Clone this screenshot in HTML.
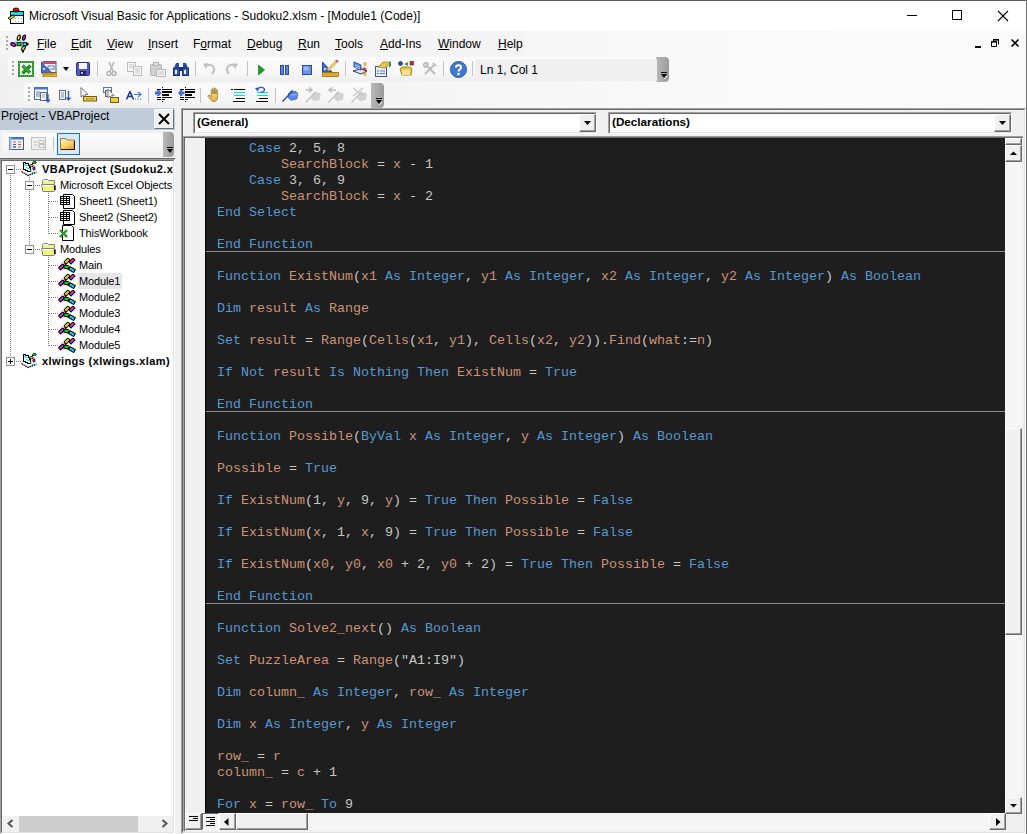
<!DOCTYPE html>
<html><head><meta charset="utf-8">
<style>
*{margin:0;padding:0;box-sizing:border-box}
html,body{width:1027px;height:834px;overflow:hidden;background:#f0f0f0;font-family:"Liberation Sans",sans-serif;position:relative}
.a{position:absolute}
.nw{white-space:nowrap}
#frameT{left:0;top:0;width:1027px;height:1px;background:#5b5b5b}
#frameR{left:1026px;top:0;width:1px;height:834px;background:#6f6f6f}
#title{left:0;top:1px;width:1026px;height:30px;background:#fff}
#dock{left:0;top:31px;width:1026px;height:77px;background:linear-gradient(to right,#f0f0f0 0px,#f3f3f3 300px,#f9f9f9 700px,#fafafa 1026px)}
#menubar{left:0;top:31px;width:525px;height:26px;background:#f4f4f4}
.menu{top:37px;font-size:12px;color:#000;white-space:nowrap;line-height:14px}
.menu u{text-decoration:underline;text-decoration-thickness:1px;text-underline-offset:1px}
.tb{background:linear-gradient(#fbfbfb,#f6f6f6 70%,#eeeeee);border-radius:3px 0 0 3px}
.grip{width:2px;background:repeating-linear-gradient(#ababab 0 2px,transparent 2px 4px)}
.sep{width:1px;background:#c4c4c4}
.chev{background:linear-gradient(to right,#b9b9b9,#9a9a9a);border-radius:0 4px 4px 0}
#code{left:206px;top:138px;width:799px;height:675px;background:#1e1e1e;overflow:hidden}
pre{font-family:"Liberation Mono",monospace;font-size:13.333px;line-height:16px;position:absolute;left:11px;top:3px;color:#c8c8c8;margin:0}
.k{color:#5499d4}.i{color:#cf9274}
.hsep{left:0;width:799px;height:1px;background:#8e8e8e}
.tree{font-size:11px;color:#000;white-space:nowrap;line-height:13px;letter-spacing:-0.12px}
.b3d{background:#f0f0f0;border-top:1px solid #fff;border-left:1px solid #fff;border-right:1px solid #696969;border-bottom:1px solid #696969;box-shadow:inset -1px -1px 0 #a0a0a0}
.chk{background-color:#f7f7f7;background-image:repeating-conic-gradient(#fdfdfd 0 25%,#eeeeee 0 50%);background-size:2px 2px}

</style></head><body>
<div id="title" class="a">
  <svg class="a" style="left:6px;top:5px" width="20" height="20" viewBox="0 0 20 20">
    <rect x="4.5" y="5.5" width="13" height="12" fill="#fff" stroke="#000" stroke-width="1"/>
    <rect x="5" y="6" width="12" height="3" fill="#00e4f4"/>
    <path d="M5 9.5 H17" stroke="#000" stroke-width="1"/>
    <path d="M9 12.5 H10 M12 12.5 H13 M15 12.5 H16 M9 15.5 H10 M12 15.5 H13 M15 15.5 H16" stroke="#b0b0b0"/>
    <ellipse cx="10" cy="4" rx="3" ry="2" fill="#e00000" stroke="#000" stroke-width=".8"/>
    <path d="M2 12 L7 9 L9 10.5 L4 13.5 Z" fill="#e8d800" stroke="#000" stroke-width=".8"/>
  </svg>
  <div class="a nw" style="left:29px;top:8px;font-size:12px;color:#000">Microsoft Visual Basic for Applications - Sudoku2.xlsm - [Module1 (Code)]</div>
  <div class="a" style="left:907px;top:14px;width:10px;height:1px;background:#000"></div>
  <div class="a" style="left:952px;top:9px;width:10px;height:10px;border:1px solid #000"></div>
  <svg class="a" style="left:997px;top:9px" width="12" height="12" viewBox="0 0 12 12"><path d="M1 1 L11 11 M11 1 L1 11" stroke="#000" stroke-width="1.1"/></svg>
</div>
<div id="dock" class="a"></div>
<div id="menubar" class="a"></div>
<div class="a grip" style="left:6px;top:36px;height:14px"></div>
<svg class="a" style="left:8px;top:32px" width="22" height="22" viewBox="0 0 22 22">
  <path d="M6 11.5 L10.5 7.5 M11.5 8 L16 12 M12 13 L15 16" stroke="#00d0e0" stroke-width="1.3" stroke-dasharray="1 .6"/>
  <ellipse cx="10.8" cy="5.6" rx="1.4" ry="2.7" transform="rotate(18 10.8 5.6)" fill="#f4f000" stroke="#000" stroke-width="1.1"/>
  <ellipse cx="16" cy="5.6" rx="1.4" ry="2.7" transform="rotate(18 16 5.6)" fill="#e800e8" stroke="#000" stroke-width="1.1"/>
  <ellipse cx="5.3" cy="12.5" rx="2.6" ry="1.6" transform="rotate(30 5.3 12.5)" fill="#e800e8" stroke="#000" stroke-width="1.1"/>
  <rect x="9" y="10.5" width="4" height="3.2" fill="#00e000" stroke="#000" stroke-width=".9"/>
  <rect x="15" y="10.5" width="3.5" height="3.2" fill="#00e0f0" stroke="#000" stroke-width=".9"/>
  <rect x="18.5" y="10.8" width="2" height="2.6" fill="#000"/>
  <ellipse cx="15.5" cy="16.3" rx="1.4" ry="2.5" transform="rotate(35 15.5 16.3)" fill="#f4f000" stroke="#000" stroke-width="1.1"/>
  <rect x="14" y="18.5" width="2" height="2" fill="#000"/>
</svg>
<div class="menu a" style="left:37px"><u>F</u>ile</div>
<div class="menu a" style="left:71px"><u>E</u>dit</div>
<div class="menu a" style="left:107px"><u>V</u>iew</div>
<div class="menu a" style="left:148px"><u>I</u>nsert</div>
<div class="menu a" style="left:193px">F<u>o</u>rmat</div>
<div class="menu a" style="left:247px"><u>D</u>ebug</div>
<div class="menu a" style="left:298px"><u>R</u>un</div>
<div class="menu a" style="left:335px"><u>T</u>ools</div>
<div class="menu a" style="left:380px"><u>A</u>dd-Ins</div>
<div class="menu a" style="left:438px"><u>W</u>indow</div>
<div class="menu a" style="left:498px"><u>H</u>elp</div>
<div class="a" style="left:975px;top:46px;width:6px;height:2px;background:#000"></div>
<svg class="a" style="left:990px;top:38px" width="10" height="10" viewBox="0 0 10 10"><path d="M3.5 1.5 H8.5 V6.5 M1.5 3.5 H6.5 V8.5 H1.5 Z M3.5 1 V3.5" fill="none" stroke="#000" stroke-width="1"/><rect x="3" y="1" width="6" height="1.6" fill="#000"/><rect x="1" y="3" width="6" height="1.6" fill="#000"/></svg>
<svg class="a" style="left:1010px;top:38px" width="10" height="10" viewBox="0 0 10 10"><path d="M1.5 1.5 L8.5 8.5 M8.5 1.5 L1.5 8.5" stroke="#000" stroke-width="1.6"/></svg>

<!-- toolbar 1 -->
<div class="a tb" style="left:8px;top:57px;width:650px;height:24px"></div>
<div class="a chev" style="left:656px;top:57px;width:13px;height:25px"></div>
<svg class="a" style="left:660px;top:72px" width="8" height="8" viewBox="0 0 8 8"><rect x="1" y="0" width="6" height="1" fill="#000"/><path d="M1 2 H7 L4 6 Z" fill="#000"/><path d="M4 7 L7 4" stroke="#fff" stroke-width="1"/></svg>
<div class="a grip" style="left:12px;top:61px;height:14px"></div>
<svg class="a" style="left:18px;top:61px" width="16" height="16" viewBox="0 0 16 16"><rect x="1" y="1" width="14" height="14" fill="#fff" stroke="#1f8f1f" stroke-width="2"/><rect x="1" y="1" width="14" height="14" fill="none" stroke="#c8e0c8" stroke-width=".6" stroke-dasharray="1 1"/><path d="M4.5 4.5 L12 12 M12.5 4.5 L4.5 12.5" stroke="#1f8f1f" stroke-width="3.6"/><path d="M5.5 5 L12.5 12.5" stroke="#e8f4e8" stroke-width=".8" stroke-dasharray="1 1"/></svg>
<svg class="a" style="left:41px;top:61px" width="16" height="16" viewBox="0 0 16 16"><rect x="2" y="0.5" width="13" height="11" fill="#eef2f8" stroke="#3b5a8a" stroke-width="1"/><rect x="2" y="0.5" width="13" height="2.5" fill="#d04a70"/><rect x="7" y="5" width="6" height="3" fill="#fff" stroke="#3b5a8a" stroke-width=".8"/><path d="M0 1 L0 12 L11 12 Z" fill="#3f6fd0" stroke="#23408a" stroke-width=".8"/><circle cx="3" cy="8" r="1" fill="#fff"/><rect x="2" y="12" width="14" height="4" fill="#e8b030" stroke="#9a6a10" stroke-width=".8"/><path d="M4 13 V14 M6 13 V14 M8 13 V14 M10 13 V14 M12 13 V14" stroke="#7a5a10" stroke-width=".6"/></svg>
<svg class="a" style="left:63px;top:67px" width="6" height="4" viewBox="0 0 6 4"><path d="M0 0 H6 L3 4 Z" fill="#000"/></svg>
<svg class="a" style="left:76px;top:62px" width="14" height="14" viewBox="0 0 14 14"><rect x="0.5" y="0.5" width="13" height="13" rx="1" fill="#5457c0" stroke="#2d2f80" stroke-width="1"/><rect x="3" y="1" width="8" height="6" fill="#f4f6ff"/><rect x="4" y="9" width="6" height="4" fill="#1e2060"/><rect x="5" y="10" width="2" height="2" fill="#c0c4e0"/></svg>
<div class="a sep" style="left:97px;top:61px;height:15px"></div>
<svg class="a" style="left:106px;top:62px" width="11" height="14" viewBox="0 0 11 14"><path d="M3 0 L7 9 M8 0 L4 9" stroke="#b8b8b8" stroke-width="1.6"/><circle cx="3" cy="11.5" r="2" fill="none" stroke="#b0b0b0" stroke-width="1.4"/><circle cx="8" cy="11.5" r="2" fill="none" stroke="#b0b0b0" stroke-width="1.4"/></svg>
<svg class="a" style="left:127px;top:62px" width="16" height="14" viewBox="0 0 16 14"><rect x="0.5" y="0.5" width="8" height="9" fill="#f6f6f6" stroke="#bdbdbd"/><rect x="6.5" y="4.5" width="8" height="9" fill="#f6f6f6" stroke="#bdbdbd"/><path d="M2 3 H7 M2 5 H7 M8 7 H13 M8 9 H13 M8 11 H13" stroke="#c4c4c4"/></svg>
<svg class="a" style="left:150px;top:62px" width="16" height="15" viewBox="0 0 16 15"><rect x="0.5" y="2.5" width="11" height="11" rx="1" fill="#d0d0d0" stroke="#b4b4b4"/><rect x="3.5" y="0.5" width="5" height="3" fill="#e4e4e4" stroke="#b0b0b0"/><rect x="6.5" y="7.5" width="9" height="7" fill="#f2f2f2" stroke="#b8b8b8"/><path d="M8 10 H14 M8 12 H14" stroke="#c8c8c8"/></svg>
<svg class="a" style="left:173px;top:62px" width="16" height="14" viewBox="0 0 16 14"><path d="M1 6 L3 1 H6 V6 Z M10 6 V1 H13 L15 6 Z" fill="#2a4a9a"/><rect x="0.5" y="6" width="6" height="7.5" fill="#3558b0" stroke="#1a2e70"/><rect x="9.5" y="6" width="6" height="7.5" fill="#3558b0" stroke="#1a2e70"/><rect x="6" y="5" width="4" height="4" fill="#1a2e70"/><rect x="2" y="8" width="2" height="4" fill="#e8eeff"/><rect x="11" y="8" width="2" height="4" fill="#e8eeff"/></svg>
<div class="a sep" style="left:195px;top:61px;height:15px"></div>
<svg class="a" style="left:203px;top:62px" width="13" height="13" viewBox="0 0 13 13"><path d="M3 4 C9 1 14 6 9 12" fill="none" stroke="#c4c4c4" stroke-width="2.2"/><path d="M0 2 L5 1 L3 7 Z" fill="#c0c0c0"/></svg>
<svg class="a" style="left:225px;top:62px" width="13" height="13" viewBox="0 0 13 13"><path d="M10 4 C4 1 -1 6 4 12" fill="none" stroke="#c4c4c4" stroke-width="2.2"/><path d="M13 2 L8 1 L10 7 Z" fill="#c0c0c0"/></svg>
<div class="a sep" style="left:247px;top:61px;height:15px"></div>
<svg class="a" style="left:258px;top:65px" width="7" height="10" viewBox="0 0 7 10"><path d="M0.5 0 L6.5 5 L0.5 10 Z" fill="#1ea01e" stroke="#0b6e0b" stroke-width=".6"/></svg>
<svg class="a" style="left:280px;top:65px" width="9" height="10" viewBox="0 0 9 10"><rect x="0.5" y="0.5" width="3" height="9" fill="#5a86e0" stroke="#2848a0"/><rect x="5.5" y="0.5" width="3" height="9" fill="#5a86e0" stroke="#2848a0"/></svg>
<svg class="a" style="left:302px;top:65px" width="10" height="10" viewBox="0 0 10 10"><rect x="0.5" y="0.5" width="9" height="9" fill="#6a92e6" stroke="#2a4aa0"/><rect x="1.5" y="1.5" width="5" height="4" fill="#9ab8f4"/></svg>
<svg class="a" style="left:322px;top:60px" width="17" height="17" viewBox="0 0 17 17"><path d="M0.5 2 L0.5 12 L10 12 Z" fill="#3f6fd0" stroke="#23408a" stroke-width=".9"/><circle cx="3" cy="9" r="1" fill="#fff"/><path d="M6 10 L15 1" stroke="#e8c060" stroke-width="3"/><path d="M14 0 L16 2" stroke="#c05050" stroke-width="2"/><rect x="0.5" y="12.5" width="16" height="4" fill="#e8b030" stroke="#9a6a10" stroke-width=".8"/><path d="M3 13.5 V14.5 M5 13.5 V14.5 M7 13.5 V14.5 M9 13.5 V14.5 M11 13.5 V14.5 M13 13.5 V14.5" stroke="#7a5a10" stroke-width=".6"/></svg>
<div class="a sep" style="left:345px;top:61px;height:15px"></div>
<svg class="a" style="left:352px;top:61px" width="16" height="16" viewBox="0 0 16 16"><path d="M1 10 L9 13 L15 10 L9 8 Z" fill="#dfe6f0" stroke="#2a3e6a" stroke-width="1"/><path d="M2 1 L9 4 L9 9 L2 6 Z" fill="#5a8ae0" stroke="#24489a" stroke-width=".9"/><path d="M3 4 L8 6 M3 6 L8 8" stroke="#cfe0ff" stroke-width=".7"/><path d="M13 1 L14.5 3 L13 5 L11.5 3 Z M13 11 L14.5 13 L13 15 L11.5 13 Z" fill="#f0c040" stroke="#b08010" stroke-width=".5"/><path d="M12 6 L15 8 L12 10 L10 8 Z" fill="#e04020"/></svg>
<svg class="a" style="left:375px;top:61px" width="16" height="16" viewBox="0 0 16 16"><rect x="0.5" y="5.5" width="11" height="10" fill="#e4ecf8" stroke="#3a5a8a"/><path d="M2 10 H4 M5 10 H10 M2 12.5 H4 M5 12.5 H10" stroke="#6a7ea0"/><path d="M3 6 L8 1 L13 1 L15 3 L10 7 Z" fill="#e8c050" stroke="#a07a10" stroke-width=".7"/><path d="M14 0 V7 L16 5 V1 Z" fill="#2ea04a"/></svg>
<svg class="a" style="left:398px;top:61px" width="16" height="15" viewBox="0 0 16 15"><circle cx="2.5" cy="2.5" r="2" fill="#3a4ab0" stroke="#000" stroke-width=".5"/><path d="M10 1 L6 3 L10 5 Z" fill="#30a040"/><rect x="12" y="0.5" width="3.5" height="3.5" fill="#d03020" stroke="#400" stroke-width=".5"/><path d="M2 8 L4 6 L12 6 L14 8 L13 14 H4 Z" fill="#e8c450" stroke="#a07a10" stroke-width=".9"/><rect x="4" y="9" width="8" height="5" fill="#f6e08a"/></svg>
<svg class="a" style="left:423px;top:62px" width="14" height="13" viewBox="0 0 14 13"><path d="M2 12 L11 3 M3 3 L12 12" stroke="#bcbcbc" stroke-width="2"/><path d="M0 3 L3 0 L5 2 L2 5 Z M10 1 L13 4" stroke="#b4b4b4" stroke-width="1.6" fill="none"/></svg>
<div class="a sep" style="left:443px;top:61px;height:15px"></div>
<svg class="a" style="left:450px;top:61px" width="17" height="17" viewBox="0 0 17 17"><circle cx="8.5" cy="8.5" r="8" fill="#3f78d0" stroke="#2a5aa8" stroke-width="1"/><path d="M6 6.5 C6 3.5 11 3.5 11 6.5 C11 8.5 8.5 8.5 8.5 10.5" fill="none" stroke="#fff" stroke-width="2"/><rect x="7.3" y="11.8" width="2.4" height="2.4" fill="#fff"/></svg>
<div class="a sep" style="left:472px;top:61px;height:15px"></div>

<div class="a" style="left:475px;top:59px;width:182px;height:22px;background:#efefef"></div>
<div class="a nw" style="left:480px;top:63px;font-size:12px;color:#000">Ln 1, Col 1</div>

<!-- toolbar 2 -->
<div class="a tb" style="left:24px;top:83px;width:348px;height:24px"></div>
<div class="a chev" style="left:371px;top:83px;width:13px;height:25px"></div>
<svg class="a" style="left:375px;top:98px" width="8" height="8" viewBox="0 0 8 8"><rect x="1" y="0" width="6" height="1" fill="#000"/><path d="M1 2 H7 L4 6 Z" fill="#000"/><path d="M4 7 L7 4" stroke="#fff" stroke-width="1"/></svg>
<div class="a grip" style="left:28px;top:87px;height:14px"></div>
<svg class="a" style="left:34px;top:87px" width="16" height="16" viewBox="0 0 16 16"><rect x="0.5" y="0.5" width="13" height="12" fill="#f4f8ff" stroke="#4a6aa0"/><rect x="0.5" y="0.5" width="13" height="2" fill="#4a7ad0"/><path d="M2 5 H6 M2 7 H6 M2 9 H6" stroke="#6a7a9a"/><rect x="6.5" y="5.5" width="6" height="8" fill="#fff" stroke="#5a6a8a"/><path d="M8 8 H11 M8 10 H11" stroke="#8a9ab0"/><path d="M14 7 V15 M12 12.5 L14 15 L16 12.5" stroke="#2a5ad0" stroke-width="1.3" fill="none"/></svg>
<svg class="a" style="left:59px;top:90px" width="12" height="11" viewBox="0 0 12 11"><rect x="0.5" y="0.5" width="6" height="9" fill="#f6f8ff" stroke="#5a6a90"/><path d="M2 3 H5 M2 5 H5 M2 7 H5" stroke="#7a8aa8"/><path d="M9.5 1 V10 M7.5 7.5 L9.5 10 L11.5 7.5" stroke="#2a5ad0" stroke-width="1.3" fill="none"/></svg>
<svg class="a" style="left:80px;top:87px" width="17" height="15" viewBox="0 0 17 15"><path d="M1 0.5 V10 L3.5 8 L5.5 12 L7 11 L5 7.5 L8 7.5 Z" fill="#fff" stroke="#6a6a6a" stroke-width=".9"/><rect x="3.5" y="9.5" width="13" height="4.5" fill="#f0d040" stroke="#6a5a20"/><path d="M6 11.8 H9 M10 11.8 H14" stroke="#8a7a30"/></svg>
<svg class="a" style="left:103px;top:87px" width="16" height="16" viewBox="0 0 16 16"><rect x="0.5" y="0.5" width="8" height="5" fill="#eef2f8" stroke="#6a7a90"/><rect x="2.5" y="3.5" width="6" height="6" fill="#c8d0dc" stroke="#5a6a80"/><path d="M5 2 V11 L7 9 L9 13 L10.5 12 L8.5 8.5 L11 8.5 Z" fill="#fff" stroke="#6a6a6a" stroke-width=".8"/><rect x="7.5" y="10.5" width="8" height="5" fill="#f0d040" stroke="#6a5a20"/></svg>
<svg class="a" style="left:126px;top:91px" width="16" height="9" viewBox="0 0 16 9"><path d="M0.5 8.5 L4 0.5 L7.5 8.5 M2 5.5 H6" stroke="#1e3a8a" stroke-width="1.6" fill="none"/><path d="M8 3.5 H14 M12 1 L15 3.5 L12 6" stroke="#3a7ae0" stroke-width="1.2" fill="none"/><path d="M9 8 H10 M11.5 8 H12.5 M14 8 H15" stroke="#3a5a9a" stroke-width="1"/></svg>
<div class="a sep" style="left:148px;top:88px;height:15px"></div>
<svg class="a" style="left:154px;top:86px" width="18" height="16" viewBox="0 0 18 16"><rect x="8" y="1" width="1" height="1" fill="#000"/><rect x="3" y="3" width="4" height="1" fill="#000"/><rect x="8" y="3" width="10" height="1" fill="#000"/><rect x="8" y="5" width="10" height="2" fill="#000"/><rect x="8" y="8" width="7" height="2" fill="#000"/><rect x="3" y="11" width="4" height="1" fill="#000"/><rect x="8" y="11" width="10" height="1" fill="#000"/><rect x="3" y="13" width="4" height="1" fill="#000"/><rect x="8" y="13" width="3" height="1" fill="#000"/><rect x="8" y="15" width="1" height="1" fill="#000"/><path d="M1 5.5 H4 L2.5 4 H5 L7.5 7 L5 10 H2.5 L4 8.5 H1 Z" fill="#3f70d8"/></svg>
<svg class="a" style="left:177px;top:86px" width="18" height="16" viewBox="0 0 18 16"><rect x="8" y="1" width="1" height="1" fill="#000"/><rect x="3" y="3" width="4" height="1" fill="#000"/><rect x="8" y="3" width="10" height="1" fill="#000"/><rect x="8" y="5" width="10" height="2" fill="#000"/><rect x="8" y="8" width="7" height="2" fill="#000"/><rect x="3" y="11" width="4" height="1" fill="#000"/><rect x="8" y="11" width="10" height="1" fill="#000"/><rect x="3" y="13" width="4" height="1" fill="#000"/><rect x="8" y="13" width="3" height="1" fill="#000"/><rect x="8" y="15" width="1" height="1" fill="#000"/><path d="M7.5 5.5 H4.5 L6 4 H3.5 L1 7 L3.5 10 H6 L4.5 8.5 H7.5 Z" fill="#3f70d8"/></svg>
<div class="a sep" style="left:200px;top:88px;height:15px"></div>
<svg class="a" style="left:207px;top:87px" width="15" height="16" viewBox="0 0 15 16"><defs><linearGradient id="hg" x1="0" y1="0" x2="0" y2="1"><stop offset="0" stop-color="#fbe9a0"/><stop offset="1" stop-color="#e0b040"/></linearGradient></defs><path d="M4 13 L1.2 9.6 C0.5 8.6 1.8 7.6 2.8 8.4 L4.2 9.6 V3.2 C4.2 2.2 5.8 2.2 5.8 3.2 V7 V1.6 C5.8 0.6 7.4 0.6 7.4 1.6 V7 V2 C7.4 1 9 1 9 2 V7 V3.4 C9 2.4 10.6 2.4 10.6 3.4 V10 C10.6 13 9 14.6 7 14.6 C5.6 14.6 4.6 13.8 4 13 Z" fill="url(#hg)" stroke="#9a7a30" stroke-width=".8"/></svg>
<svg class="a" style="left:230px;top:87px" width="16" height="16" viewBox="0 0 16 16"><rect x="1" y="2" width="2" height="1" fill="#000"/><rect x="4" y="2" width="11" height="1" fill="#000"/><rect x="4" y="5" width="11" height="1" fill="#00e0f0"/><rect x="4" y="8" width="11" height="1" fill="#00e0f0"/><rect x="6" y="11" width="9" height="1" fill="#000"/><rect x="3" y="14" width="12" height="1" fill="#000"/></svg>
<svg class="a" style="left:254px;top:86px" width="15" height="17" viewBox="0 0 15 17"><rect x="3" y="6" width="11" height="1" fill="#00e0f0"/><rect x="3" y="9" width="11" height="1" fill="#00e0f0"/><rect x="5" y="12" width="9" height="1" fill="#000"/><rect x="2" y="15" width="12" height="1" fill="#000"/><path d="M4 3.5 C4 1 10 0.5 10.5 3.5 C10.8 5.5 8 6.5 6.5 6" fill="none" stroke="#2058d8" stroke-width="1.2"/><path d="M1 2 L4.5 1.5 L4 6 Z" fill="#2058d8"/></svg>
<div class="a sep" style="left:275px;top:88px;height:15px"></div>
<svg class="a" style="left:282px;top:89px" width="17" height="13" viewBox="0 0 17 13"><path d="M6.5 4.5 L9.5 2 C11 3 12.5 3 14 2.5 L16 5 C15 6.5 15.5 8.5 14.5 10 C13 10.5 11 10 9.5 11.5 L6 8.5 C7 7 7 6 6.5 4.5 Z" fill="#5a8ae8" stroke="#2a50b0" stroke-width=".8"/><path d="M6.6 6 C9 5 11 6.5 15.5 5.5" stroke="#a8c4f8" stroke-width=".9" fill="none"/><path d="M0.5 12.5 L11 1.5" stroke="#2a4aa0" stroke-width="1.3"/></svg>
<svg class="a" style="left:305px;top:87px" width="17" height="16" viewBox="0 0 17 16"><g transform="translate(0,3)"><path d="M6.5 4.5 L9.5 2 C11 3 12.5 3 14 2.5 L16 5 C15 6.5 15.5 8.5 14.5 10 C13 10.5 11 10 9.5 11.5 L6 8.5 C7 7 7 6 6.5 4.5 Z" fill="#d2d2d2"/><path d="M0.5 12.5 L11 1.5" stroke="#c4c4c4" stroke-width="1.3"/></g><path d="M1 3 H6 M4 0.5 L7 3 L4 5.5" stroke="#bfbfbf" stroke-width="1.6" fill="none"/></svg>
<svg class="a" style="left:328px;top:87px" width="17" height="16" viewBox="0 0 17 16"><g transform="translate(0,3)"><path d="M6.5 4.5 L9.5 2 C11 3 12.5 3 14 2.5 L16 5 C15 6.5 15.5 8.5 14.5 10 C13 10.5 11 10 9.5 11.5 L6 8.5 C7 7 7 6 6.5 4.5 Z" fill="#d2d2d2"/><path d="M0.5 12.5 L11 1.5" stroke="#c4c4c4" stroke-width="1.3"/></g><path d="M2 3 H8 M4 0.5 L1 3 L4 5.5" stroke="#bfbfbf" stroke-width="1.6" fill="none"/></svg>
<svg class="a" style="left:351px;top:87px" width="17" height="16" viewBox="0 0 17 16"><g transform="translate(0,3)"><path d="M6.5 4.5 L9.5 2 C11 3 12.5 3 14 2.5 L16 5 C15 6.5 15.5 8.5 14.5 10 C13 10.5 11 10 9.5 11.5 L6 8.5 C7 7 7 6 6.5 4.5 Z" fill="#d2d2d2"/><path d="M0.5 12.5 L11 1.5" stroke="#c4c4c4" stroke-width="1.3"/></g><path d="M2 1 L12 9 M12 1 L2 9" stroke="#c8c8c8" stroke-width="1.3"/></svg>


<!-- project panel -->
<div class="a" style="left:0;top:108px;width:175px;height:22px;background:#bfcddb"></div>
<div class="a nw" style="left:1px;top:109px;font-size:11.9px;color:#000">Project - VBAProject</div>
<div class="a b3d" style="left:154px;top:109px;width:20px;height:20px;box-shadow:none;border-color:#fff #6d6d6d #6d6d6d #fff"></div>
<svg class="a" style="left:157px;top:112px" width="14" height="14" viewBox="0 0 14 14"><path d="M2 2 L12 12 M12 2 L2 12" stroke="#000" stroke-width="2"/></svg>
<div class="a" style="left:0;top:130px;width:175px;height:27px;background:#f0f0f0"></div>
<div class="a tb" style="left:3px;top:133px;width:160px;height:22px"></div>
<div class="a chev" style="left:163px;top:132px;width:11px;height:25px"></div>
<svg class="a" style="left:166px;top:147px" width="8" height="8" viewBox="0 0 8 8"><rect x="1" y="0" width="6" height="1" fill="#000"/><path d="M1 2 H7 L4 6 Z" fill="#000"/></svg>
<svg class="a" style="left:9px;top:137px" width="15" height="13" viewBox="0 0 15 13"><rect x="0.5" y="0.5" width="14" height="12" fill="#f0f4ff" stroke="#3a5ab0"/><rect x="0.5" y="0.5" width="14" height="2" fill="#4a7ad8"/><rect x="0.5" y="0.5" width="2" height="12" fill="#a8bce8"/><path d="M4 5 H7 M9 5 H12 M4 7.5 H7 M9 7.5 H12 M4 10 H7 M9 10 H12" stroke="#e05030" stroke-width="1"/><path d="M4 7.5 H7 M4 10 H7" stroke="#3a5ab0"/></svg>
<svg class="a" style="left:31px;top:137px" width="15" height="13" viewBox="0 0 15 13"><rect x="0.5" y="0.5" width="14" height="12" fill="#f0f0f0" stroke="#c0c0c0"/><path d="M3 5 H6 M3 8 H6" stroke="#b8b8b8"/><rect x="8" y="3.5" width="5" height="3" fill="none" stroke="#c0c0c0"/><rect x="8" y="7.5" width="5" height="3" fill="none" stroke="#c0c0c0"/></svg>
<div class="a sep" style="left:53px;top:137px;height:14px"></div>
<div class="a" style="left:57px;top:133px;width:23px;height:22px;background:#dde8f4;border:1px solid #0a78d8"></div>
<svg class="a" style="left:60px;top:138px" width="15" height="12" viewBox="0 0 15 12"><defs><linearGradient id="fg" x1="0" y1="0" x2="1" y2="1"><stop offset="0" stop-color="#fff2a0"/><stop offset=".5" stop-color="#f5d060"/><stop offset="1" stop-color="#e09a20"/></linearGradient></defs><path d="M0.5 0.5 H6 L7 2 H14.5 V11.5 H0.5 Z" fill="#f8e8a0" stroke="#8a7a60" stroke-width="1"/><rect x="1" y="3" width="13.5" height="8" fill="url(#fg)"/><path d="M1 11.5 H14.5 V3" stroke="#201000" stroke-width="1.2" fill="none"/></svg>

<!-- tree -->
<div class="a" style="left:0;top:157px;width:175px;height:677px;background:#f0f0f0"></div>
<div class="a" style="left:0;top:158px;width:175px;height:1px;background:#696969"></div>
<div class="a" style="left:0;top:159px;width:175px;height:675px;border-top:1px solid #a0a0a0;border-left:1px solid #a0a0a0;border-right:1px solid #fff;border-bottom:1px solid #fff"></div>
<div class="a" style="left:1px;top:160px;width:173px;height:673px;border-top:1px solid #696969;border-left:1px solid #696969;border-right:1px solid #e3e3e3;border-bottom:1px solid #e3e3e3;background:#fff"></div>
<div class="a" style="left:0;top:0;width:173px;height:816px;overflow:hidden">
<div class="a" style="left:10px;top:175px;width:1px;height:187px;background:repeating-linear-gradient(#7a7a7a 0 1px,transparent 1px 2px)"></div>
<div class="a" style="left:6px;top:165px;width:9px;height:9px;border:1px solid #919191;background:#fff"></div><div class="a" style="left:8px;top:169px;width:5px;height:1px;background:#000"></div>
<div class="a" style="left:16px;top:169px;width:5px;height:1px;background:repeating-linear-gradient(to right,#7a7a7a 0 1px,transparent 1px 2px)"></div>
<svg class="a" style="left:21px;top:161px" width="17" height="16" viewBox="0 0 17 16"><path d="M0.5 10.5 L7 14.5 L15.5 11 L11 8.5 L5 9 Z" fill="#fff"/><path d="M0.5 10.5 L7 14.5 L15.5 11" fill="none" stroke="#000" stroke-width="1.3" stroke-dasharray="1.6 .7"/><path d="M2.5 1.5 H4.5 V2.5 H7.5 V4.5 H8.5 V6.5 H9.5 V10.5 H6.5 V9.5 H4.5 V8.5 H2.5 Z" fill="#fff" stroke="#000" stroke-width="1.1"/><path d="M3 3.5 H4.5 M4 4.5 H6.5 M5 6.5 H6.5 M6 7.5 H8.5 M9 9.5 H11 M11 11.5 H13" stroke="#00e8f0" stroke-width="1.2"/><path d="M10 4 L13 1 M11 5 L12.5 6.5" stroke="#000" stroke-width="1"/><ellipse cx="10.5" cy="4.5" rx="1.8" ry="1.1" fill="#f0f000" stroke="#000" stroke-width=".8"/><ellipse cx="13.5" cy="1.5" rx="1.8" ry="1.1" fill="#00e000" stroke="#000" stroke-width=".8"/><ellipse cx="13" cy="7.5" rx="1.1" ry="1.7" fill="#f000f0" stroke="#000" stroke-width=".8"/></svg>
<div class="a tree" style="left:42px;top:163px;font-weight:bold;font-size:11px;letter-spacing:.4px">VBAProject (Sudoku2.xlsm)</div>
<div class="a" style="left:29px;top:177px;width:1px;height:72px;background:repeating-linear-gradient(#7a7a7a 0 1px,transparent 1px 2px)"></div>
<div class="a" style="left:25px;top:181px;width:9px;height:9px;border:1px solid #919191;background:#fff"></div><div class="a" style="left:27px;top:185px;width:5px;height:1px;background:#000"></div>
<div class="a" style="left:35px;top:185px;width:6px;height:1px;background:repeating-linear-gradient(to right,#7a7a7a 0 1px,transparent 1px 2px)"></div>
<svg class="a" style="left:41px;top:179px" width="16" height="13" viewBox="0 0 16 13"><path d="M1.5 1.5 L2.5 0.5 H6.5 L7.5 1.5 H13.5 V11.5 H1.5 Z" fill="#fff" stroke="#808080" stroke-width="1"/><rect x="2" y="2" width="11" height="3" fill="#f6f27a"/><path d="M0.5 5.5 H13.5 L14.5 6.5 L13 12.5 H2 Z" fill="#fff" stroke="#808080" stroke-width="1"/><rect x="2" y="7" width="11" height="5" fill="#f6f27a"/><path d="M13.5 6.5 L14 11" stroke="#000" stroke-width="1.6"/></svg>
<div class="a tree" style="left:60px;top:179px">Microsoft Excel Objects</div>
<div class="a" style="left:48px;top:193px;width:1px;height:41px;background:repeating-linear-gradient(#7a7a7a 0 1px,transparent 1px 2px)"></div>
<div class="a" style="left:49px;top:201px;width:10px;height:1px;background:repeating-linear-gradient(to right,#7a7a7a 0 1px,transparent 1px 2px)"></div>
<svg class="a" style="left:60px;top:194px" width="16" height="15" viewBox="0 0 16 15"><path d="M3.5 0.5 H12.5 L14.5 2.5 V14.5 H3.5 Z" fill="#fff" stroke="#000" stroke-width="1"/><rect x="0.5" y="2.5" width="9" height="8" fill="#fff" stroke="#000" stroke-width="1"/><path d="M0.5 4.5 H9.5 M0.5 6.5 H9.5 M0.5 8.5 H9.5 M3.5 2.5 V10.5 M6.5 2.5 V10.5" stroke="#000" stroke-width="1"/></svg>
<div class="a tree" style="left:79px;top:195px">Sheet1 (Sheet1)</div>
<div class="a" style="left:49px;top:217px;width:10px;height:1px;background:repeating-linear-gradient(to right,#7a7a7a 0 1px,transparent 1px 2px)"></div>
<svg class="a" style="left:60px;top:210px" width="16" height="15" viewBox="0 0 16 15"><path d="M3.5 0.5 H12.5 L14.5 2.5 V14.5 H3.5 Z" fill="#fff" stroke="#000" stroke-width="1"/><rect x="0.5" y="2.5" width="9" height="8" fill="#fff" stroke="#000" stroke-width="1"/><path d="M0.5 4.5 H9.5 M0.5 6.5 H9.5 M0.5 8.5 H9.5 M3.5 2.5 V10.5 M6.5 2.5 V10.5" stroke="#000" stroke-width="1"/></svg>
<div class="a tree" style="left:79px;top:211px">Sheet2 (Sheet2)</div>
<div class="a" style="left:49px;top:233px;width:10px;height:1px;background:repeating-linear-gradient(to right,#7a7a7a 0 1px,transparent 1px 2px)"></div>
<svg class="a" style="left:59px;top:225px" width="16" height="16" viewBox="0 0 16 16"><path d="M3.5 0.5 H12.5 L14.5 2.5 V15.5 H3.5 Z" fill="#fff" stroke="#000" stroke-width="1"/><path d="M1 5 L8 12 M8 5 L1 12" stroke="#1e8a1e" stroke-width="2.4"/><path d="M1 5 L8 12 M8 5 L1 12" stroke="#9ad09a" stroke-width=".6" stroke-dasharray="1 1"/></svg>
<div class="a tree" style="left:79px;top:227px">ThisWorkbook</div>
<div class="a" style="left:25px;top:245px;width:9px;height:9px;border:1px solid #919191;background:#fff"></div><div class="a" style="left:27px;top:249px;width:5px;height:1px;background:#000"></div>
<div class="a" style="left:35px;top:249px;width:6px;height:1px;background:repeating-linear-gradient(to right,#7a7a7a 0 1px,transparent 1px 2px)"></div>
<svg class="a" style="left:41px;top:243px" width="16" height="13" viewBox="0 0 16 13"><path d="M1.5 1.5 L2.5 0.5 H6.5 L7.5 1.5 H13.5 V11.5 H1.5 Z" fill="#fff" stroke="#808080" stroke-width="1"/><rect x="2" y="2" width="11" height="3" fill="#f6f27a"/><path d="M0.5 5.5 H13.5 L14.5 6.5 L13 12.5 H2 Z" fill="#fff" stroke="#808080" stroke-width="1"/><rect x="2" y="7" width="11" height="5" fill="#f6f27a"/><path d="M13.5 6.5 L14 11" stroke="#000" stroke-width="1.6"/></svg>
<div class="a tree" style="left:60px;top:243px">Modules</div>
<div class="a" style="left:48px;top:257px;width:1px;height:89px;background:repeating-linear-gradient(#7a7a7a 0 1px,transparent 1px 2px)"></div>
<div class="a" style="left:78px;top:273px;width:44px;height:16px;background:#e6e6e6"></div>
<div class="a" style="left:49px;top:265px;width:10px;height:1px;background:repeating-linear-gradient(to right,#7a7a7a 0 1px,transparent 1px 2px)"></div>
<svg class="a" style="left:58px;top:258px" width="18" height="15" viewBox="0 0 18 15"><path d="M3 9 L11 2 M7 6 L15 13 M4 9.5 L13 12" stroke="#000" stroke-width="1"/><rect x="7.5" y="0.25" width="3" height="5.5" transform="rotate(45 9 3)" fill="#f8f000" stroke="#000" stroke-width="1"/><rect x="12.5" y="0.25" width="3" height="5.5" transform="rotate(45 14 3)" fill="#f020f0" stroke="#000" stroke-width="1"/><rect x="2.0" y="6.25" width="3" height="5.5" transform="rotate(45 3.5 9)" fill="#f020f0" stroke="#000" stroke-width="1"/><rect x="6" y="7.5" width="5" height="3" rx="1" fill="#00e000" stroke="#000" stroke-width="1"/><rect x="11" y="10" width="6" height="3.2" transform="rotate(30 14 11.5)" fill="#00e0f0" stroke="#000" stroke-width="1"/></svg>
<div class="a tree" style="left:79px;top:259px">Main</div>
<div class="a" style="left:49px;top:281px;width:10px;height:1px;background:repeating-linear-gradient(to right,#7a7a7a 0 1px,transparent 1px 2px)"></div>
<svg class="a" style="left:58px;top:274px" width="18" height="15" viewBox="0 0 18 15"><path d="M3 9 L11 2 M7 6 L15 13 M4 9.5 L13 12" stroke="#000" stroke-width="1"/><rect x="7.5" y="0.25" width="3" height="5.5" transform="rotate(45 9 3)" fill="#f8f000" stroke="#000" stroke-width="1"/><rect x="12.5" y="0.25" width="3" height="5.5" transform="rotate(45 14 3)" fill="#f020f0" stroke="#000" stroke-width="1"/><rect x="2.0" y="6.25" width="3" height="5.5" transform="rotate(45 3.5 9)" fill="#f020f0" stroke="#000" stroke-width="1"/><rect x="6" y="7.5" width="5" height="3" rx="1" fill="#00e000" stroke="#000" stroke-width="1"/><rect x="11" y="10" width="6" height="3.2" transform="rotate(30 14 11.5)" fill="#00e0f0" stroke="#000" stroke-width="1"/></svg>
<div class="a tree" style="left:79px;top:275px">Module1</div>
<div class="a" style="left:49px;top:297px;width:10px;height:1px;background:repeating-linear-gradient(to right,#7a7a7a 0 1px,transparent 1px 2px)"></div>
<svg class="a" style="left:58px;top:290px" width="18" height="15" viewBox="0 0 18 15"><path d="M3 9 L11 2 M7 6 L15 13 M4 9.5 L13 12" stroke="#000" stroke-width="1"/><rect x="7.5" y="0.25" width="3" height="5.5" transform="rotate(45 9 3)" fill="#f8f000" stroke="#000" stroke-width="1"/><rect x="12.5" y="0.25" width="3" height="5.5" transform="rotate(45 14 3)" fill="#f020f0" stroke="#000" stroke-width="1"/><rect x="2.0" y="6.25" width="3" height="5.5" transform="rotate(45 3.5 9)" fill="#f020f0" stroke="#000" stroke-width="1"/><rect x="6" y="7.5" width="5" height="3" rx="1" fill="#00e000" stroke="#000" stroke-width="1"/><rect x="11" y="10" width="6" height="3.2" transform="rotate(30 14 11.5)" fill="#00e0f0" stroke="#000" stroke-width="1"/></svg>
<div class="a tree" style="left:79px;top:291px">Module2</div>
<div class="a" style="left:49px;top:313px;width:10px;height:1px;background:repeating-linear-gradient(to right,#7a7a7a 0 1px,transparent 1px 2px)"></div>
<svg class="a" style="left:58px;top:306px" width="18" height="15" viewBox="0 0 18 15"><path d="M3 9 L11 2 M7 6 L15 13 M4 9.5 L13 12" stroke="#000" stroke-width="1"/><rect x="7.5" y="0.25" width="3" height="5.5" transform="rotate(45 9 3)" fill="#f8f000" stroke="#000" stroke-width="1"/><rect x="12.5" y="0.25" width="3" height="5.5" transform="rotate(45 14 3)" fill="#f020f0" stroke="#000" stroke-width="1"/><rect x="2.0" y="6.25" width="3" height="5.5" transform="rotate(45 3.5 9)" fill="#f020f0" stroke="#000" stroke-width="1"/><rect x="6" y="7.5" width="5" height="3" rx="1" fill="#00e000" stroke="#000" stroke-width="1"/><rect x="11" y="10" width="6" height="3.2" transform="rotate(30 14 11.5)" fill="#00e0f0" stroke="#000" stroke-width="1"/></svg>
<div class="a tree" style="left:79px;top:307px">Module3</div>
<div class="a" style="left:49px;top:329px;width:10px;height:1px;background:repeating-linear-gradient(to right,#7a7a7a 0 1px,transparent 1px 2px)"></div>
<svg class="a" style="left:58px;top:322px" width="18" height="15" viewBox="0 0 18 15"><path d="M3 9 L11 2 M7 6 L15 13 M4 9.5 L13 12" stroke="#000" stroke-width="1"/><rect x="7.5" y="0.25" width="3" height="5.5" transform="rotate(45 9 3)" fill="#f8f000" stroke="#000" stroke-width="1"/><rect x="12.5" y="0.25" width="3" height="5.5" transform="rotate(45 14 3)" fill="#f020f0" stroke="#000" stroke-width="1"/><rect x="2.0" y="6.25" width="3" height="5.5" transform="rotate(45 3.5 9)" fill="#f020f0" stroke="#000" stroke-width="1"/><rect x="6" y="7.5" width="5" height="3" rx="1" fill="#00e000" stroke="#000" stroke-width="1"/><rect x="11" y="10" width="6" height="3.2" transform="rotate(30 14 11.5)" fill="#00e0f0" stroke="#000" stroke-width="1"/></svg>
<div class="a tree" style="left:79px;top:323px">Module4</div>
<div class="a" style="left:49px;top:345px;width:10px;height:1px;background:repeating-linear-gradient(to right,#7a7a7a 0 1px,transparent 1px 2px)"></div>
<svg class="a" style="left:58px;top:338px" width="18" height="15" viewBox="0 0 18 15"><path d="M3 9 L11 2 M7 6 L15 13 M4 9.5 L13 12" stroke="#000" stroke-width="1"/><rect x="7.5" y="0.25" width="3" height="5.5" transform="rotate(45 9 3)" fill="#f8f000" stroke="#000" stroke-width="1"/><rect x="12.5" y="0.25" width="3" height="5.5" transform="rotate(45 14 3)" fill="#f020f0" stroke="#000" stroke-width="1"/><rect x="2.0" y="6.25" width="3" height="5.5" transform="rotate(45 3.5 9)" fill="#f020f0" stroke="#000" stroke-width="1"/><rect x="6" y="7.5" width="5" height="3" rx="1" fill="#00e000" stroke="#000" stroke-width="1"/><rect x="11" y="10" width="6" height="3.2" transform="rotate(30 14 11.5)" fill="#00e0f0" stroke="#000" stroke-width="1"/></svg>
<div class="a tree" style="left:79px;top:339px">Module5</div>
<div class="a" style="left:6px;top:357px;width:9px;height:9px;border:1px solid #919191;background:#fff"></div><div class="a" style="left:8px;top:361px;width:5px;height:1px;background:#000"></div><div class="a" style="left:10px;top:359px;width:1px;height:5px;background:#000"></div>
<div class="a" style="left:16px;top:361px;width:5px;height:1px;background:repeating-linear-gradient(to right,#7a7a7a 0 1px,transparent 1px 2px)"></div>
<svg class="a" style="left:21px;top:353px" width="17" height="16" viewBox="0 0 17 16"><path d="M0.5 10.5 L7 14.5 L15.5 11 L11 8.5 L5 9 Z" fill="#fff"/><path d="M0.5 10.5 L7 14.5 L15.5 11" fill="none" stroke="#000" stroke-width="1.3" stroke-dasharray="1.6 .7"/><path d="M2.5 1.5 H4.5 V2.5 H7.5 V4.5 H8.5 V6.5 H9.5 V10.5 H6.5 V9.5 H4.5 V8.5 H2.5 Z" fill="#fff" stroke="#000" stroke-width="1.1"/><path d="M3 3.5 H4.5 M4 4.5 H6.5 M5 6.5 H6.5 M6 7.5 H8.5 M9 9.5 H11 M11 11.5 H13" stroke="#00e8f0" stroke-width="1.2"/><path d="M10 4 L13 1 M11 5 L12.5 6.5" stroke="#000" stroke-width="1"/><ellipse cx="10.5" cy="4.5" rx="1.8" ry="1.1" fill="#f0f000" stroke="#000" stroke-width=".8"/><ellipse cx="13.5" cy="1.5" rx="1.8" ry="1.1" fill="#00e000" stroke="#000" stroke-width=".8"/><ellipse cx="13" cy="7.5" rx="1.1" ry="1.7" fill="#f000f0" stroke="#000" stroke-width=".8"/></svg>
<div class="a tree" style="left:42px;top:355px;font-weight:bold;font-size:11px;letter-spacing:.4px">xlwings (xlwings.xlam)</div>
</div>
<div class="a" style="left:2px;top:816px;width:171px;height:16px;background:#f0f0f0"></div>
<div class="a" style="left:19px;top:816px;width:119px;height:16px;background:#cdcdcd"></div>
<svg class="a" style="left:5px;top:818px" width="11" height="11" viewBox="0 0 11 11"><path d="M7.5 2 L3.5 5.5 L7.5 9" fill="none" stroke="#555" stroke-width="2"/></svg>
<svg class="a" style="left:159px;top:818px" width="11" height="11" viewBox="0 0 11 11"><path d="M3.5 2 L7.5 5.5 L3.5 9" fill="none" stroke="#555" stroke-width="2"/></svg>

<!-- code window -->
<div class="a" style="left:181px;top:108px;width:845px;height:726px;background:#f0f0f0;border-top:1px solid #a0a0a0;border-left:1px solid #a0a0a0;border-right:1px solid #fff;border-bottom:1px solid #fff"></div>
<div class="a" style="left:182px;top:109px;width:843px;height:724px;border-top:1px solid #696969;border-left:1px solid #696969;border-right:1px solid #e3e3e3;border-bottom:1px solid #e3e3e3"></div>
<!-- combos -->
<div class="a" style="left:193px;top:112px;width:404px;height:22px;background:#fff;border-top:1px solid #a0a0a0;border-left:1px solid #a0a0a0;border-right:1px solid #fff;border-bottom:1px solid #fff"></div>
<div class="a" style="left:194px;top:113px;width:402px;height:20px;border-top:1px solid #696969;border-left:1px solid #696969;border-right:1px solid #e3e3e3;border-bottom:1px solid #e3e3e3"></div>
<div class="a nw" style="left:197px;top:115px;font-size:11.7px;font-weight:bold;color:#000">(General)</div>
<div class="a b3d" style="left:579px;top:114px;width:17px;height:18px"></div>
<svg class="a" style="left:584px;top:121px" width="8" height="5" viewBox="0 0 8 5"><path d="M0 0 H7 L3.5 4 Z" fill="#000"/></svg>

<div class="a" style="left:608px;top:112px;width:404px;height:22px;background:#fff;border-top:1px solid #a0a0a0;border-left:1px solid #a0a0a0;border-right:1px solid #fff;border-bottom:1px solid #fff"></div>
<div class="a" style="left:609px;top:113px;width:402px;height:20px;border-top:1px solid #696969;border-left:1px solid #696969;border-right:1px solid #e3e3e3;border-bottom:1px solid #e3e3e3"></div>
<div class="a nw" style="left:612px;top:115px;font-size:11.7px;font-weight:bold;color:#000">(Declarations)</div>
<div class="a b3d" style="left:994px;top:114px;width:17px;height:18px"></div>
<svg class="a" style="left:999px;top:121px" width="8" height="5" viewBox="0 0 8 5"><path d="M0 0 H7 L3.5 4 Z" fill="#000"/></svg>

<!-- code area border -->
<div class="a" style="left:183px;top:136px;width:840px;height:695px;border-top:1px solid #a0a0a0;border-left:1px solid #a0a0a0"></div>
<div class="a" style="left:184px;top:137px;width:839px;height:694px;border-top:1px solid #696969;border-left:1px solid #696969"></div>
<div class="a" style="left:185px;top:138px;width:20px;height:675px;background:#f0f0f0"></div>
<div class="a" style="left:205px;top:138px;width:1px;height:675px;background:#000"></div>
<div id="code" class="a">
<pre>    <span class="k">Case</span> 2, 5, 8
        <span class="i">SearchBlock</span> = <span class="i">x</span> - 1
    <span class="k">Case</span> 3, 6, 9
        <span class="i">SearchBlock</span> = <span class="i">x</span> - 2
<span class="k">End</span> <span class="k">Select</span>

<span class="k">End</span> <span class="k">Function</span>

<span class="k">Function</span> <span class="i">ExistNum</span>(<span class="i">x1</span> <span class="k">As</span> <span class="k">Integer</span>, <span class="i">y1</span> <span class="k">As</span> <span class="k">Integer</span>, <span class="i">x2</span> <span class="k">As</span> <span class="k">Integer</span>, <span class="i">y2</span> <span class="k">As</span> <span class="k">Integer</span>) <span class="k">As</span> <span class="k">Boolean</span>

<span class="k">Dim</span> <span class="i">result</span> <span class="k">As</span> <span class="i">Range</span>

<span class="k">Set</span> <span class="i">result</span> = <span class="i">Range</span>(<span class="i">Cells</span>(<span class="i">x1</span>, <span class="i">y1</span>), <span class="i">Cells</span>(<span class="i">x2</span>, <span class="i">y2</span>)).<span class="i">Find</span>(<span class="i">what</span>:=<span class="i">n</span>)

<span class="k">If</span> <span class="k">Not</span> <span class="i">result</span> <span class="k">Is</span> <span class="k">Nothing</span> <span class="k">Then</span> <span class="i">ExistNum</span> = <span class="k">True</span>

<span class="k">End</span> <span class="k">Function</span>

<span class="k">Function</span> <span class="i">Possible</span>(<span class="k">ByVal</span> <span class="i">x</span> <span class="k">As</span> <span class="k">Integer</span>, <span class="i">y</span> <span class="k">As</span> <span class="k">Integer</span>) <span class="k">As</span> <span class="k">Boolean</span>

<span class="i">Possible</span> = <span class="k">True</span>

<span class="k">If</span> <span class="i">ExistNum</span>(1, <span class="i">y</span>, 9, <span class="i">y</span>) = <span class="k">True</span> <span class="k">Then</span> <span class="i">Possible</span> = <span class="k">False</span>

<span class="k">If</span> <span class="i">ExistNum</span>(<span class="i">x</span>, 1, <span class="i">x</span>, 9) = <span class="k">True</span> <span class="k">Then</span> <span class="i">Possible</span> = <span class="k">False</span>

<span class="k">If</span> <span class="i">ExistNum</span>(<span class="i">x0</span>, <span class="i">y0</span>, <span class="i">x0</span> + 2, <span class="i">y0</span> + 2) = <span class="k">True</span> <span class="k">Then</span> <span class="i">Possible</span> = <span class="k">False</span>

<span class="k">End</span> <span class="k">Function</span>

<span class="k">Function</span> <span class="i">Solve2_next</span>() <span class="k">As</span> <span class="k">Boolean</span>

<span class="k">Set</span> <span class="i">PuzzleArea</span> = <span class="i">Range</span>(&quot;A1:I9&quot;)

<span class="k">Dim</span> <span class="i">column_</span> <span class="k">As</span> <span class="k">Integer</span>, <span class="i">row_</span> <span class="k">As</span> <span class="k">Integer</span>

<span class="k">Dim</span> <span class="i">x</span> <span class="k">As</span> <span class="k">Integer</span>, <span class="i">y</span> <span class="k">As</span> <span class="k">Integer</span>

<span class="i">row_</span> = <span class="i">r</span>
<span class="i">column_</span> = <span class="i">c</span> + 1

<span class="k">For</span> <span class="i">x</span> = <span class="i">row_</span> <span class="k">To</span> 9</pre>
<div class="a hsep" style="top:113px"></div>
<div class="a hsep" style="top:273px"></div>
<div class="a hsep" style="top:465px"></div>
</div>
<!-- vscroll -->
<div class="a chk" style="left:1005px;top:138px;width:17px;height:675px"></div>
<div class="a b3d" style="left:1005px;top:138px;width:17px;height:7px"></div>
<div class="a b3d" style="left:1005px;top:145px;width:17px;height:17px"></div>
<svg class="a" style="left:1010px;top:151px" width="8" height="5" viewBox="0 0 8 5"><path d="M0 4 H7 L3.5 0.5 Z" fill="#000"/></svg>
<div class="a b3d" style="left:1005px;top:428px;width:17px;height:207px"></div>

<!-- hscroll -->
<div class="a chk" style="left:185px;top:813px;width:820px;height:17px"></div>
<div class="a" style="left:1006px;top:814px;width:16px;height:16px;background:#f0f0f0"></div>
<div class="a b3d" style="left:185px;top:813px;width:17px;height:17px"></div>
<div class="a" style="left:202px;top:813px;width:17px;height:17px;background:#f3f3f3;border-top:1px solid #696969;border-left:1px solid #696969;border-right:1px solid #fff;border-bottom:1px solid #fff"></div>
<svg class="a" style="left:187px;top:814px" width="13" height="13" viewBox="0 0 13 13"><path d="M2 2.5 H11 M6 4.5 H11 M2 6.5 H11" stroke="#000" stroke-width="1.2"/></svg>
<svg class="a" style="left:204px;top:815px" width="13" height="13" viewBox="0 0 13 13"><path d="M2 2.5 H11 M6 4.5 H11 M2 6.5 H11 M6 8.5 H11 M2 10.5 H11" stroke="#000" stroke-width="1.2"/></svg>
<div class="a b3d" style="left:219px;top:813px;width:17px;height:17px"></div>
<svg class="a" style="left:224px;top:818px" width="5" height="8" viewBox="0 0 5 8"><path d="M4.5 0 V8 L0 4 Z" fill="#000"/></svg>
<div class="a b3d" style="left:236px;top:813px;width:72px;height:17px"></div>
<div class="a b3d" style="left:989px;top:813px;width:17px;height:17px"></div>
<svg class="a" style="left:996px;top:818px" width="5" height="8" viewBox="0 0 5 8"><path d="M0 0 V8 L4.5 4 Z" fill="#000"/></svg>

<div class="a b3d" style="left:1005px;top:797px;width:17px;height:17px"></div>
<svg class="a" style="left:1010px;top:804px" width="8" height="5" viewBox="0 0 8 5"><path d="M0 0 H7 L3.5 3.5 Z" fill="#000"/></svg>
<div id="frameT" class="a"></div>
<div id="frameR" class="a"></div>

</body></html>
